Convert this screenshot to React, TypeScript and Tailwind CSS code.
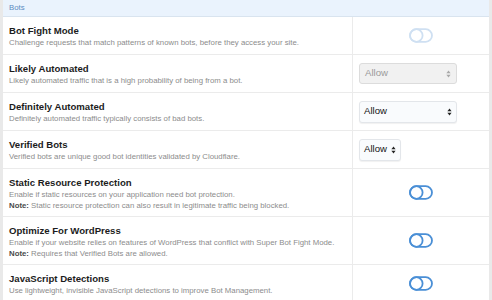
import React from "react";

type Control =
  | { kind: "toggle"; disabled?: boolean }
  | { kind: "select"; value: string; width: string; disabled?: boolean };

type Row = {
  title: string;
  desc: string;
  note?: string;
  control: Control;
};

const rows: Row[] = [
  {
    title: "Bot Fight Mode",
    desc: "Challenge requests that match patterns of known bots, before they access your site.",
    control: { kind: "toggle", disabled: true },
  },
  {
    title: "Likely Automated",
    desc: "Likely automated traffic that is a high probability of being from a bot.",
    control: { kind: "select", value: "Allow", width: "w-[98px]", disabled: true },
  },
  {
    title: "Definitely Automated",
    desc: "Definitely automated traffic typically consists of bad bots.",
    control: { kind: "select", value: "Allow", width: "w-[98px]" },
  },
  {
    title: "Verified Bots",
    desc: "Verified bots are unique good bot identities validated by Cloudflare.",
    control: { kind: "select", value: "Allow", width: "w-auto gap-[4px]" },
  },
  {
    title: "Static Resource Protection",
    desc: "Enable if static resources on your application need bot protection.",
    note: "Static resource protection can also result in legitimate traffic being blocked.",
    control: { kind: "toggle" },
  },
  {
    title: "Optimize For WordPress",
    desc: "Enable if your website relies on features of WordPress that conflict with Super Bot Fight Mode.",
    note: "Requires that Verified Bots are allowed.",
    control: { kind: "toggle" },
  },
  {
    title: "JavaScript Detections",
    desc: "Use lightweight, invisible JavaScript detections to improve Bot Management.",
    control: { kind: "toggle" },
  },
];

function Toggle({ disabled }: { disabled?: boolean }) {
  // 꺼진 상태 토글 — 알약 외곽선 + 왼쪽 원
  return (
    <svg
      width="24"
      height="15"
      viewBox="0 0 24 15"
      fill="none"
      stroke={disabled ? "#cfe0f2" : "#4a8fd6"}
      strokeWidth="1.8"
    >
      <rect x="1" y="1.2" width="22" height="12.6" rx="6.3" />
      <circle cx="7.3" cy="7.5" r="6.3" />
    </svg>
  );
}

function SelectBox({ value, width, disabled }: { value: string; width: string; disabled?: boolean }) {
  return (
    <div
      className={
        disabled
          ? `${width} flex h-[21px] items-center justify-between rounded-[3px] border border-[#dcdcdc] bg-[#f1f1f1] pl-[5px] pr-[5px] text-[9.6px] text-[#9a9a9a]`
          : `${width} flex h-[22px] items-center justify-between rounded-[3px] border border-[#e3e6ea] bg-[#f9fbfd] pl-[4px] pr-[4px] text-[9.6px] text-[#111] shadow-[0_1px_1px_rgba(0,0,0,0.06)]`
      }
    >
      <span>{value}</span>
      <svg width="5" height="8" viewBox="0 0 5 8" fill={disabled ? "#a8a8a8" : "#222"}>
        <path d="M2.5 0.5 L4.6 3.2 H0.4 Z" />
        <path d="M2.5 7.5 L4.6 4.8 H0.4 Z" />
      </svg>
    </div>
  );
}

export default function App() {
  return (
    <div
      className="h-[300px] w-[492px] overflow-hidden bg-[#e9e9e9] px-[3px]"
      style={{ fontFamily: '"Liberation Sans", Arial, Helvetica, sans-serif' }}
    >
      <div className="bg-white">
        <div className="flex h-[17px] items-center border-b border-[#d9e4ef] bg-[#eaf3fd] pl-[6px] text-[7.8px] text-[#5b8cc2]">
          Bots
        </div>
        {rows.map((row) => (
          <div key={row.title} className="flex border-b border-[#ebebeb]">
            <div
              className={
                row.note
                  ? "w-[350px] shrink-0 border-r border-[#ebebeb] pb-[5px] pl-[6px] pt-[7px]"
                  : "w-[350px] shrink-0 border-r border-[#ebebeb] pb-[6px] pl-[6px] pt-[7px]"
              }
            >
              <div className="text-[9.6px] font-bold leading-[13px] text-[#1c1c1c]">{row.title}</div>
              <div className="text-[7.8px] leading-[11px] text-[#8c8c8c]">{row.desc}</div>
              {row.note && (
                <div className="text-[7.8px] leading-[11px] text-[#8c8c8c]">
                  <span className="font-bold text-[#4a4a4a]">Note:</span> {row.note}
                </div>
              )}
            </div>
            {row.control.kind === "toggle" ? (
              <div className="flex flex-1 items-center justify-center">
                <Toggle disabled={row.control.disabled} />
              </div>
            ) : (
              <div className="flex flex-1 items-center pl-[6px]">
                <SelectBox
                  value={row.control.value}
                  width={row.control.width}
                  disabled={row.control.disabled}
                />
              </div>
            )}
          </div>
        ))}
      </div>
    </div>
  );
}
